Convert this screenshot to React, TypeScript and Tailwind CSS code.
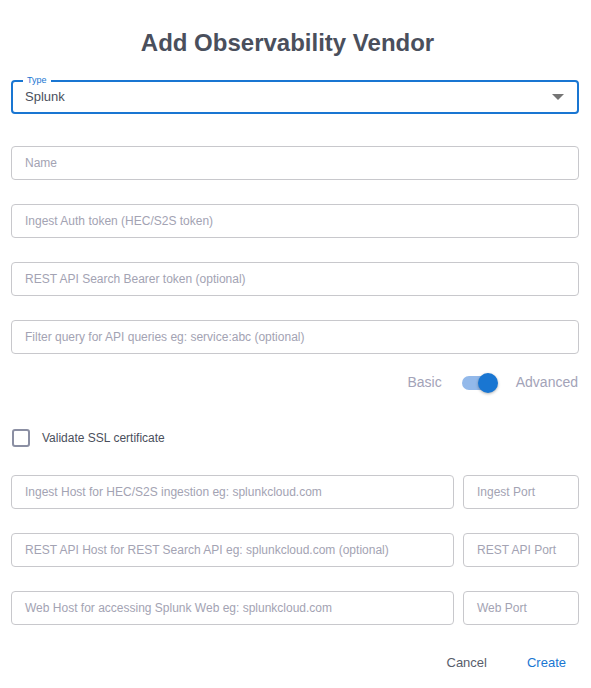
import React from "react";

function Field({ placeholder, className = "" }: { placeholder: string; className?: string }) {
  return (
    <div
      className={`flex h-[34px] items-center rounded-[4px] border border-[#c8c8cc] px-[13px] text-[12px] text-[#a3a3b3] ${className}`}
    >
      {placeholder}
    </div>
  );
}

export default function App() {
  return (
    <div
      className="w-[591px] h-[688px] bg-white pl-[11px] pr-[12px] pt-[29px]"
      style={{ fontFamily: '"Liberation Sans", Arial, sans-serif' }}
    >
      <h1 className="pr-[15px] text-center text-[24px] font-bold leading-[28px] text-[#4a4f5c]">
        Add Observability Vendor
      </h1>

      {/* Type select */}
      <div className="relative mt-[23px] flex h-[34px] items-center justify-between rounded-[4px] border-2 border-[#1976d2] pl-[12px] pr-[12px]">
        <span className="absolute -top-[7px] left-[10px] bg-white px-[4px] text-[9px] leading-[10px] text-[#1976d2]">
          Type
        </span>
        <span className="text-[13px] text-[#4a4f5c]">Splunk</span>
        <svg width="12" height="6" viewBox="0 0 12 6" className="mr-[1px]">
          <path d="M0 0 L12 0 L6 6 Z" fill="#757575" />
        </svg>
      </div>

      <div className="mt-[32px] flex flex-col gap-[24px]">
        <Field placeholder="Name" />
        <Field placeholder="Ingest Auth token (HEC/S2S token)" />
        <Field placeholder="REST API Search Bearer token (optional)" />
        <Field placeholder="Filter query for API queries eg: service:abc (optional)" />
      </div>

      {/* Basic / Advanced toggle */}
      <div className="mt-[18px] flex items-center justify-end text-[14px] text-[#a3a3b8]">
        <span>Basic</span>
        <div className="relative ml-[20px] mr-[18px] flex h-[20px] w-[36px] items-center">
          <div className="h-[14px] w-[34px] rounded-full bg-[#93b9ea]" />
          <div className="absolute right-0 top-0 h-[20px] w-[20px] rounded-full bg-[#1976d2] shadow-[0_1px_3px_rgba(0,0,0,0.3)]" />
        </div>
        <span className="mr-px">Advanced</span>
      </div>

      {/* Checkbox */}
      <div className="mt-[36px] flex items-center">
        <div className="ml-px h-[18px] w-[18px] rounded-[3px] border-2 border-[#8b8fa3]" />
        <span className="ml-[12px] text-[12px] text-[#4a4f5c]">Validate SSL certificate</span>
      </div>

      <div className="mt-[28px] flex flex-col gap-[24px]">
        <div className="flex gap-[9px]">
          <Field className="flex-1" placeholder="Ingest Host for HEC/S2S ingestion eg: splunkcloud.com" />
          <Field className="w-[116px]" placeholder="Ingest Port" />
        </div>
        <div className="flex gap-[9px]">
          <Field className="flex-1" placeholder="REST API Host for REST Search API eg: splunkcloud.com (optional)" />
          <Field className="w-[116px]" placeholder="REST API Port" />
        </div>
        <div className="flex gap-[9px]">
          <Field className="flex-1" placeholder="Web Host for accessing Splunk Web eg: splunkcloud.com" />
          <Field className="w-[116px]" placeholder="Web Port" />
        </div>
      </div>

      <div className="mt-[22px] flex justify-end text-[13px]">
        <button className="px-[8px] py-[6px] text-[#585d6b]">Cancel</button>
        <button className="ml-[24px] mr-[5px] px-[8px] py-[6px] text-[#1976d2]">Create</button>
      </div>
    </div>
  );
}
